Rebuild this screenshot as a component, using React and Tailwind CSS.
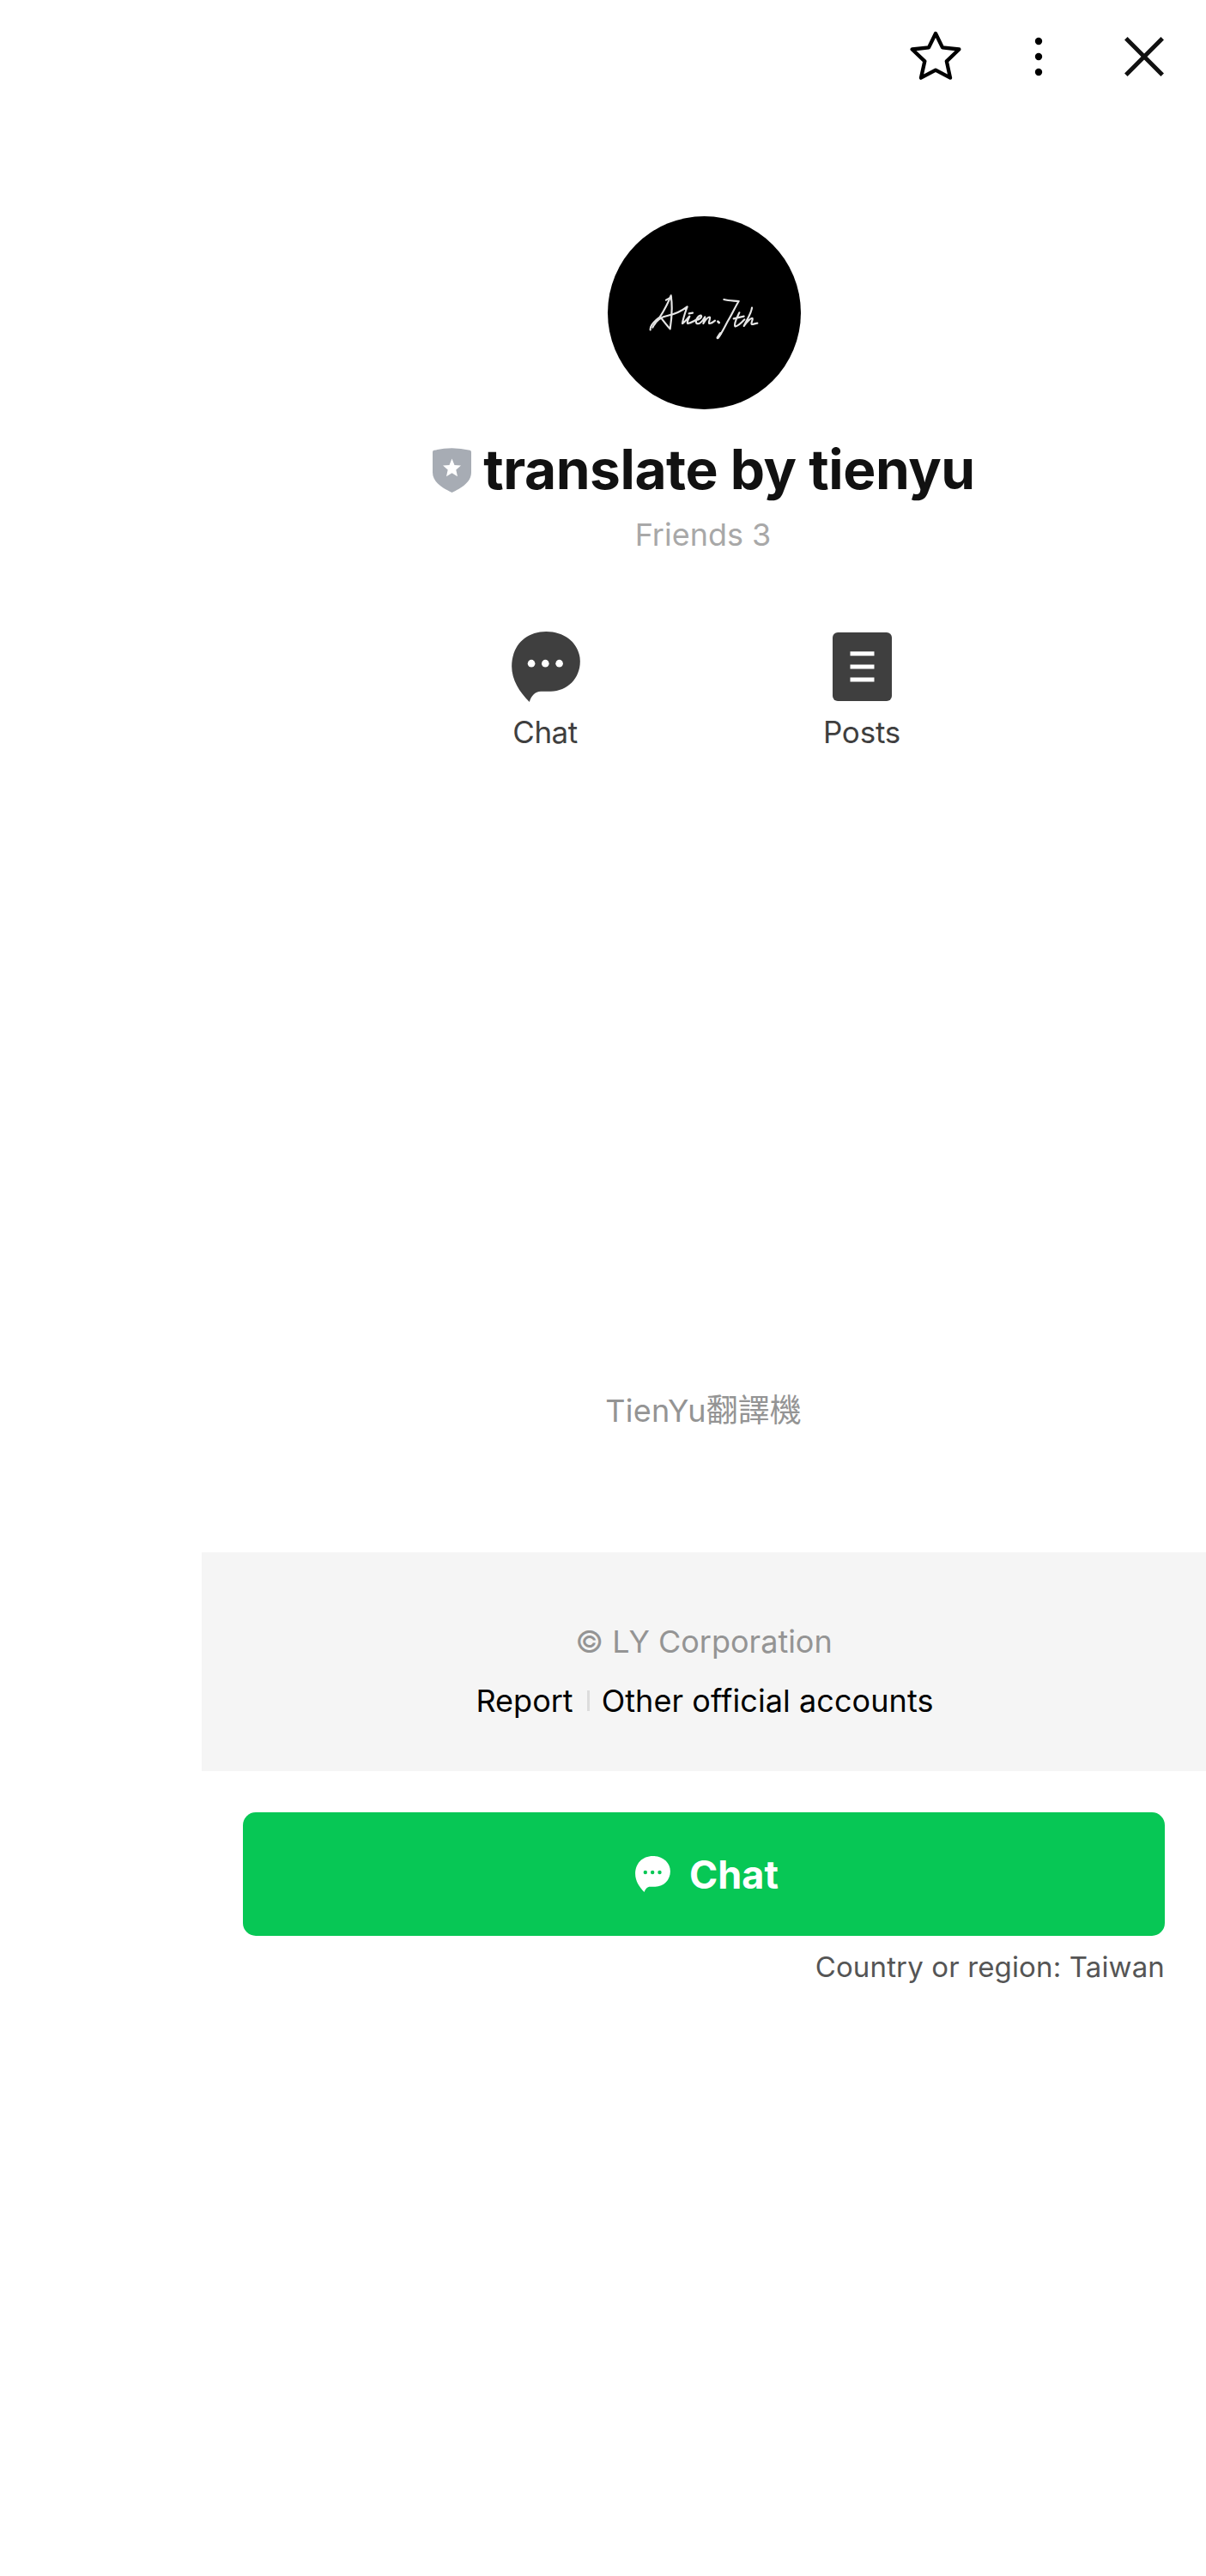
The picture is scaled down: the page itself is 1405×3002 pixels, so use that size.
function StarIcon() {
  return (
    <svg className="h-[60px] w-[60px]" viewBox="90 78 180 180" fill="none" stroke="#000" strokeWidth="13" strokeLinejoin="round">
      <path d="M180 87 L204 136 L262 142.500 L218.500 184 L231 242 L180 215 L129 242 L142 184 L98 142.500 L156 136 Z" />
    </svg>
  );
}

function MoreIcon() {
  return (
    <svg className="h-[48px] w-[12px]" viewBox="0 0 12 48" fill="#000">
      <circle cx="6" cy="6" r="4.200" />
      <circle cx="6" cy="24" r="4.200" />
      <circle cx="6" cy="42" r="4.200" />
    </svg>
  );
}

function CloseIcon() {
  return (
    <svg className="h-[48px] w-[48px]" viewBox="0 0 48 48" stroke="#111" strokeWidth="5">
      <path d="M2.800 2.800 L45.200 45.200 M45.200 2.800 L2.800 45.200" />
    </svg>
  );
}

function BubbleIcon({ className, dots }) {
  return (
    <svg className={className} viewBox="78 78 240 247" fill="currentColor">
      <path d="M199 78 C270 78 318 125 318 183 C318 243 273 288 215 288 L180 288 C160 288 147 303 140 325 C105 290 78 247 78 200 C78 130 125 78 199 78 Z" />
      <g fill={dots}>
        <circle cx="147" cy="190" r="13" />
        <circle cx="196" cy="190" r="13" />
        <circle cx="245" cy="190" r="13" />
      </g>
    </svg>
  );
}

function PostsIcon() {
  return (
    <svg className="h-[80px] w-[69px]" viewBox="0 0 69 80">
      <rect width="69" height="80" rx="6" fill="#3f3f3f" />
      <path d="M20.500 24.800 h28 M20.500 40 h28 M20.500 55 h28" stroke="#fff" strokeWidth="5" />
    </svg>
  );
}

function ShieldIcon() {
  return (
    <svg className="h-[52px] w-[45px]" viewBox="0 0 45 51" preserveAspectRatio="none">
      <path d="M0 4.500 Q0 3.200 1.500 2.800 Q22.500 -2.200 43.500 2.800 Q45 3.200 45 4.500 V28 C45 39 33.500 46 22.500 51 C11.500 46 0 39 0 28 Z" fill="#a7acb4" />
      <path d="M22.500 12.300 L25.500 19.500 L33 20.100 L27.300 25 L29 32.700 L22.500 28.700 L16 32.700 L17.700 25 L12 20.100 L19.500 19.500 Z" fill="#fff" />
    </svg>
  );
}

function Avatar() {
  return (
    <div className="h-[225px] w-[225px] overflow-hidden rounded-full bg-black">
      <svg className="h-full w-full" viewBox="54 36 675 675" fill="none" stroke="#e6e6e6" strokeWidth="6.500" strokeLinecap="round" strokeLinejoin="round">
        <path d="M203 433 C202 422 212 406 236 389 C248 370 264 342 275 313 C279 340 279 385 272 430 C262 420 250 404 240 391" />
        <path d="M258 329 L276 319 M211 425 C220 405 238 389 262 384 C290 378 314 366 332 352 C325 372 318 390 315 411 C324 406 333 392 340 386 C334 398 330 410 334 411 C344 410 352 404 362 399" />
        <path d="M338 376 L351 374" />
        <path d="M362 399 C374 398 386 388 380 383 C370 383 358 402 364 410 C372 416 384 406 394 388 C394 396 390 404 388 411 C396 398 406 387 411 389 C414 394 404 408 409 411 C417 411 422 407 429 401" />
        <path d="M439 404 L443 408" strokeWidth="8" />
        <path d="M460 327 C478 332 494 331 512 333 C500 352 488 380 474 402 C462 424 452 445 441 460" />
        <path d="M438 461 L448 446" strokeWidth="9" />
        <path d="M514 373 C506 390 494 412 499 421 C508 423 520 410 532 397 M494 394 L530 386" />
        <path d="M558 356 C556 376 540 398 530 420 C540 404 556 390 560 393 C562 400 552 411 558 414 C564 414 570 410 577 410" />
      </svg>
    </div>
  );
}

export default function App() {
  return (
    <div className="min-h-[3002px] w-[1405px] bg-white pl-[235px] font-['Inter','Noto_Sans_CJK_TC',sans-serif]">
      <header className="flex h-[132px] items-center justify-end pr-[48px]">
        <button aria-label="Favorite"><StarIcon /></button>
        <button aria-label="More" className="ml-[84px]"><MoreIcon /></button>
        <button aria-label="Close" className="ml-[93px]"><CloseIcon /></button>
      </header>

      <main>
        <section className="flex h-[1677px] flex-col items-center pt-[120px]">
          <Avatar />
          <div className="mt-[38px] flex h-[64px] items-center gap-[14px]">
            <span className="pt-[2px]"><ShieldIcon /></span>
            <h1 className="text-[64px] leading-[64px] font-bold tracking-[-0.450px] whitespace-nowrap text-[#111]">translate by tienyu</h1>
          </div>
          <p className="mt-[22px] pr-[2px] text-[36px] leading-[44px] text-[#a8a8a8]">Friends 3</p>

          <nav className="mt-[91px] flex w-full pl-[311px]">
            <a className="flex w-[180px] flex-col items-center text-[#3f3f3f]">
              <BubbleIcon className="h-[82px] w-[80px]" dots="#fff" />
              <span className="mt-[13px] pr-[2px] text-[35px] leading-[44px] tracking-[-0.500px]">Chat</span>
            </a>
            <a className="ml-[188px] flex w-[180px] flex-col items-center text-[#3f3f3f]">
              <span className="flex h-[82px] items-center"><PostsIcon /></span>
              <span className="mt-[13px] text-[35px] leading-[44px] tracking-[-0.200px]">Posts</span>
            </a>
          </nav>

          <p className="mt-[747px] flex h-[44px] items-center pr-[1px] text-[36px] leading-[44px] tracking-[0.300px] text-[#949494]">
            TienYu<span className="text-[37px] tracking-normal">翻譯機</span>
          </p>
        </section>

        <footer className="flex h-[255px] flex-col items-center bg-[#f5f5f5] pt-[82px] text-[36px] leading-[44px]">
          <p className="text-[#949494]">© LY Corporation</p>
          <div className="mt-[25px] flex items-center pl-[2px] text-black">
            <a>Report</a>
            <span className="mr-[14px] ml-[16px] h-[24px] w-[3px] bg-[#dcdcdc]" />
            <a className="tracking-[0.080px]">Other official accounts</a>
          </div>
        </footer>

        <div className="px-[48px] pt-[48px]">
          <button className="flex h-[144px] w-full items-center justify-center rounded-[15px] bg-[#07c755] pl-[7px] text-white">
            <BubbleIcon className="h-[42px] w-[41px]" dots="#07c755" />
            <span className="ml-[22px] pt-[2px] text-[45px] leading-[54px] font-bold">Chat</span>
          </button>
          <p className="mt-[16px] text-right text-[33px] leading-[40px] tracking-[0.140px] text-[#555]">Country or region: Taiwan</p>
        </div>
      </main>
    </div>
  );
}
